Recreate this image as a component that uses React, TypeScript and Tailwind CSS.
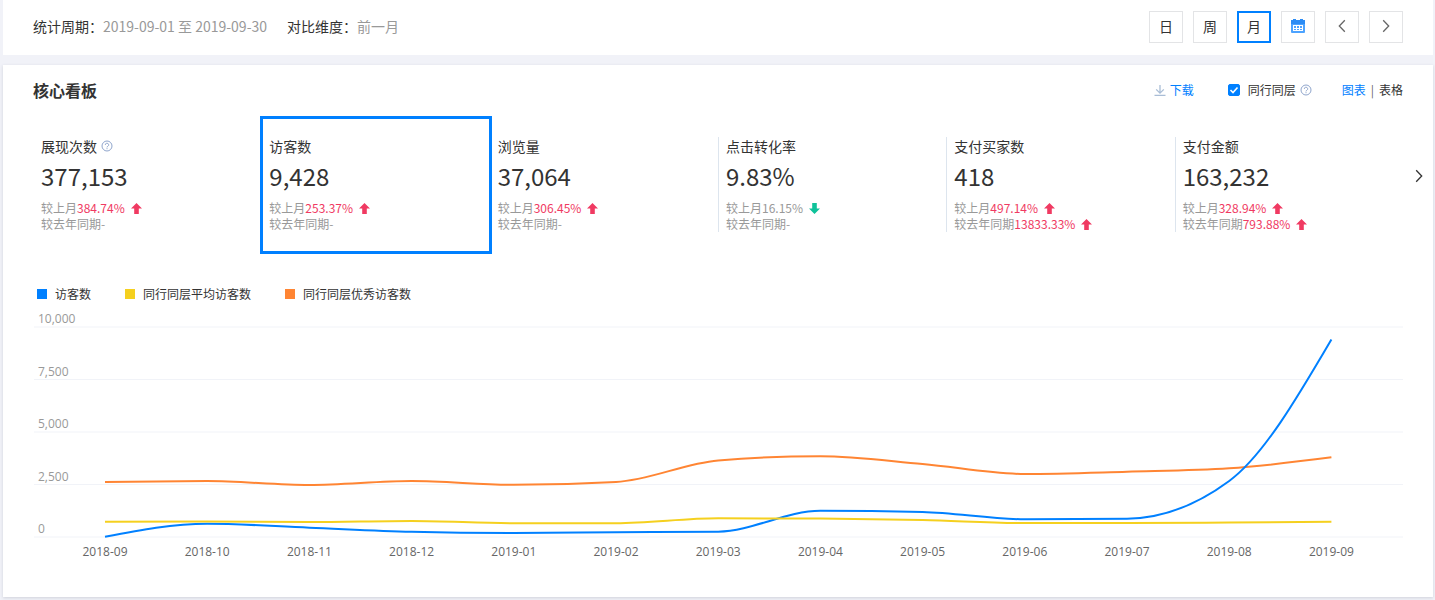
import { useState } from "react";

type Change = { value: string; dir?: "up" | "down" };

type Metric = {
  label: string;
  value: string;
  help?: boolean;
  month: Change;
  year: Change;
};

const metrics: Metric[] = [
  { label: "展现次数", value: "377,153", help: true, month: { value: "384.74%", dir: "up" }, year: { value: "-" } },
  { label: "访客数", value: "9,428", month: { value: "253.37%", dir: "up" }, year: { value: "-" } },
  { label: "浏览量", value: "37,064", month: { value: "306.45%", dir: "up" }, year: { value: "-" } },
  { label: "点击转化率", value: "9.83%", month: { value: "16.15%", dir: "down" }, year: { value: "-" } },
  { label: "支付买家数", value: "418", month: { value: "497.14%", dir: "up" }, year: { value: "13833.33%", dir: "up" } },
  { label: "支付金额", value: "163,232", month: { value: "328.94%", dir: "up" }, year: { value: "793.88%", dir: "up" } },
];

const months = [
  "2018-09", "2018-10", "2018-11", "2018-12", "2019-01", "2019-02", "2019-03",
  "2019-04", "2019-05", "2019-06", "2019-07", "2019-08", "2019-09",
];

const series = [
  {
    name: "同行同层优秀访客数",
    color: "#ff8533",
    data: [2620, 2665, 2475, 2665, 2485, 2620, 3645, 3850, 3475, 3000, 3110, 3270, 3795],
  },
  {
    name: "访客数",
    color: "#0080ff",
    data: [10, 633, 443, 252, 190, 224, 252, 1252, 1190, 843, 870, 2668, 9405],
  },
  {
    name: "同行同层平均访客数",
    color: "#f5d01f",
    data: [730, 738, 714, 762, 657, 657, 890, 876, 810, 667, 667, 690, 724],
  },
];

const legend = [
  { name: "访客数", swatch: "bg-[#0080ff]" },
  { name: "同行同层平均访客数", swatch: "bg-[#f5d01f]" },
  { name: "同行同层优秀访客数", swatch: "bg-[#ff8533]" },
];

const BASE = 233;
const PLOT = 210;
const px = (i: number) => 72 + i * 102.2;
const py = (v: number) => BASE - (v / 10000) * PLOT;

// monotone cubic, so the curve never overshoots a month
function linePath(values: number[]) {
  const pts = values.map((v, i) => [px(i), py(v)]);
  const n = pts.length;
  const d: number[] = [];
  for (let i = 0; i < n - 1; i++) {
    d.push((pts[i + 1][1] - pts[i][1]) / (pts[i + 1][0] - pts[i][0]));
  }
  const m: number[] = new Array(n).fill(0);
  for (let i = 1; i < n - 1; i++) {
    const a = d[i - 1];
    const b = d[i];
    const p = (a + b) / 2;
    m[i] = (Math.sign(a) + Math.sign(b)) * Math.min(Math.abs(a), Math.abs(b), Math.abs(p) / 2);
  }
  m[0] = (3 * d[0] - m[1]) / 2;
  m[n - 1] = (3 * d[n - 2] - m[n - 2]) / 2;

  let path = `M${pts[0][0]},${pts[0][1]}`;
  for (let i = 0; i < n - 1; i++) {
    const h = (pts[i + 1][0] - pts[i][0]) / 3;
    path += `C${pts[i][0] + h},${pts[i][1] + m[i] * h} ${pts[i + 1][0] - h},${pts[i + 1][1] - m[i + 1] * h} ${pts[i + 1][0]},${pts[i + 1][1]}`;
  }
  return path;
}

function HelpIcon() {
  return (
    <svg width="12" height="12" viewBox="0 0 12 12" fill="none" stroke="#8fa5cc" aria-hidden="true">
      <circle cx="6" cy="6" r="5" />
      <path d="M4.3 4.9a1.7 1.6 0 1 1 2.6 1.3c-.6.4-.9.6-.9 1.2" />
      <path d="M6 8.2v1" />
    </svg>
  );
}

function Arrow({ dir }: { dir: "up" | "down" }) {
  return (
    <svg width="11" height="11" viewBox="0 0 11 11" className="ml-1.5" aria-hidden="true">
      {dir === "up" ? (
        <path d="M5.5 0 11 5.5H7.8V11H3.2V5.5H0z" fill="#f03a62" />
      ) : (
        <path d="M5.5 11 11 5.5H7.8V0H3.2v5.5H0z" fill="#0fc29a" />
      )}
    </svg>
  );
}

function Chevron({ dir }: { dir: "left" | "right" }) {
  return (
    <svg width="8" height="14" viewBox="0 0 8 14" fill="none" stroke="currentColor" strokeWidth="1.3" aria-hidden="true">
      <path d={dir === "left" ? "M6.8 1.3 1.3 7l5.5 5.7" : "M1.2 1.3 6.7 7l-5.5 5.7"} />
    </svg>
  );
}

function CalendarIcon() {
  return (
    <svg width="14" height="14" viewBox="0 0 14 14" aria-hidden="true">
      <path d="M0 1h14v4H0z" fill="#2b8cf5" />
      <path d="M2 0h3v1H2zM9 0h3v1H9z" fill="#2b8cf5" />
      <path d="M0 5h14v8a1 1 0 0 1-1 1H1a1 1 0 0 1-1-1z" fill="#4da3ff" />
      <path d="M2 6h10v6H2z" fill="#fff" />
      <path d="M3 7h2v2H3zM6 7h2v2H6zM9 7h2v2H9zM3 10h2v1H3zM6 10h2v1H6zM9 10h2v1H9z" fill="#4da3ff" />
    </svg>
  );
}

function ChangeLine({ label, change }: { label: string; change: Change }) {
  return (
    <span className="flex h-4 items-center text-xs leading-4 text-[#999]">
      {label}
      <span className={change.dir === "up" ? "text-[#f03a62]" : ""}>{change.value}</span>
      {change.dir && <Arrow dir={change.dir} />}
    </span>
  );
}

function Toolbar() {
  const [period, setPeriod] = useState("月");
  const box = "flex h-8 w-[34px] justify-center border bg-white text-sm";
  const iconBox = `${box} items-center border-[#e3e4e6] pb-0.5 text-[#666]`;

  return (
    <header className="flex items-start justify-between bg-white px-[30px] pb-3 pt-[11px]">
      <div className="flex gap-5 text-sm leading-[30px]">
        <p>
          统计周期：<span className="text-[#999]">2019-09-01 至 2019-09-30</span>
        </p>
        <p>
          对比维度：<span className="text-[#999]">前一月</span>
        </p>
      </div>
      <div className="flex gap-2.5">
        {["日", "周", "月"].map((p) => (
          <button
            key={p}
            type="button"
            onClick={() => setPeriod(p)}
            className={`${box} items-center pb-0.5 ${p === period ? "border-2 border-[#0080ff]" : "border-[#e3e4e6]"}`}
          >
            {p}
          </button>
        ))}
        <button type="button" aria-label="选择日期" className={iconBox}>
          <CalendarIcon />
        </button>
        <button type="button" aria-label="上一月" className={iconBox}>
          <Chevron dir="left" />
        </button>
        <button type="button" aria-label="下一月" className={iconBox}>
          <Chevron dir="right" />
        </button>
      </div>
    </header>
  );
}

function BoardHeader() {
  return (
    <div className="flex h-6 items-center justify-between">
      <h2 className="text-base font-bold leading-6">核心看板</h2>
      <div className="flex items-center text-xs">
        <a href="#download" className="flex items-center gap-1 text-[#0080ff]">
          <svg width="12" height="12" viewBox="0 0 12 12" fill="none" stroke="#a9bdd6" strokeWidth="1.3" aria-hidden="true">
            <path d="M6 1v8M2.2 5.4 6 9.2l3.8-3.8M.5 11.3h11" />
          </svg>
          下载
        </a>
        <div className="ml-[34px] flex items-center">
          <span className="relative flex">
            <input
              id="peer"
              type="checkbox"
              defaultChecked
              className="peer size-3 appearance-none rounded-xs border border-[#0080ff] checked:bg-[#0080ff]"
            />
            <svg
              viewBox="0 0 12 12"
              fill="none"
              stroke="#fff"
              strokeWidth="1.6"
              className="pointer-events-none absolute inset-0 hidden size-3 peer-checked:block"
              aria-hidden="true"
            >
              <path d="m2.5 6 2.5 2.5 4.5-5" />
            </svg>
          </span>
          <label htmlFor="peer" className="ml-2 mr-1">
            同行同层
          </label>
          <HelpIcon />
        </div>
        <div className="ml-[30px] flex items-center gap-[5px]">
          <a href="#chart" className="text-[#0080ff]">
            图表
          </a>
          <span className="text-[#666]">|</span>
          <a href="#table">表格</a>
        </div>
      </div>
    </div>
  );
}

function MetricRow() {
  const [active, setActive] = useState(1);

  return (
    <div className="relative mt-[35px]">
      <div className="grid grid-cols-6">
        {metrics.map((m, i) => (
          <button
            key={m.label}
            type="button"
            onClick={() => setActive(i)}
            className={`relative flex flex-col border-l pl-[7px] text-left ${
              i === 0 || i === active ? "border-transparent" : "border-[#dde5ee]"
            }`}
          >
            <span className="flex items-center gap-1 text-sm leading-[18px]">
              {m.label}
              {m.help && <HelpIcon />}
            </span>
            <span className="mb-[3px] text-2xl leading-[42px]">{m.value}</span>
            <ChangeLine label="较上月" change={m.month} />
            <ChangeLine label="较去年同期" change={m.year} />
            {i === active && (
              <span className="absolute -inset-x-0.5 -bottom-[22px] -top-[21px] z-10 border-3 border-[#0080ff]" />
            )}
          </button>
        ))}
      </div>
      <button type="button" aria-label="更多指标" className="absolute -right-5 top-8 text-[#333]">
        <Chevron dir="right" />
      </button>
    </div>
  );
}

function TrendChart() {
  return (
    <svg
      viewBox="0 0 1370 261"
      className="block w-full font-['Open_Sans','Noto_Sans_CJK_SC',sans-serif] text-xs"
      role="img"
      aria-label="访客数趋势"
    >
      {[0, 2500, 5000, 7500, 10000].map((v) => (
        <g key={v}>
          <path d={`M1 ${py(v)}H1371`} stroke="#f1f3f8" />
          <text x="5" y={py(v) - 4} fill="#999">
            {v.toLocaleString("en-US")}
          </text>
        </g>
      ))}
      {series.map((s) => (
        <path key={s.name} d={linePath(s.data)} fill="none" stroke={s.color} strokeWidth="2" />
      ))}
      {months.map((m, i) => (
        <text key={m} x={px(i)} y="252" fill="#666" textAnchor="middle">
          {m}
        </text>
      ))}
    </svg>
  );
}

export default function App() {
  return (
    <div className="min-h-screen bg-[#f1f2f8] pl-[3px] pr-0.5 font-['Noto_Sans_CJK_SC',sans-serif] text-[#333]">
      <Toolbar />
      <main className="mt-2.5 bg-white px-[30px] pb-8 pt-[13px] shadow-[0_1px_3px_#cfd1da]">
        <BoardHeader />
        <MetricRow />
        <ul className="mt-[52px] flex h-5 items-center gap-[34px] pl-1 text-xs">
          {legend.map((l) => (
            <li key={l.name} className="flex items-center gap-2">
              <span className={`size-2.5 ${l.swatch}`} />
              {l.name}
            </li>
          ))}
        </ul>
        <TrendChart />
      </main>
    </div>
  );
}
